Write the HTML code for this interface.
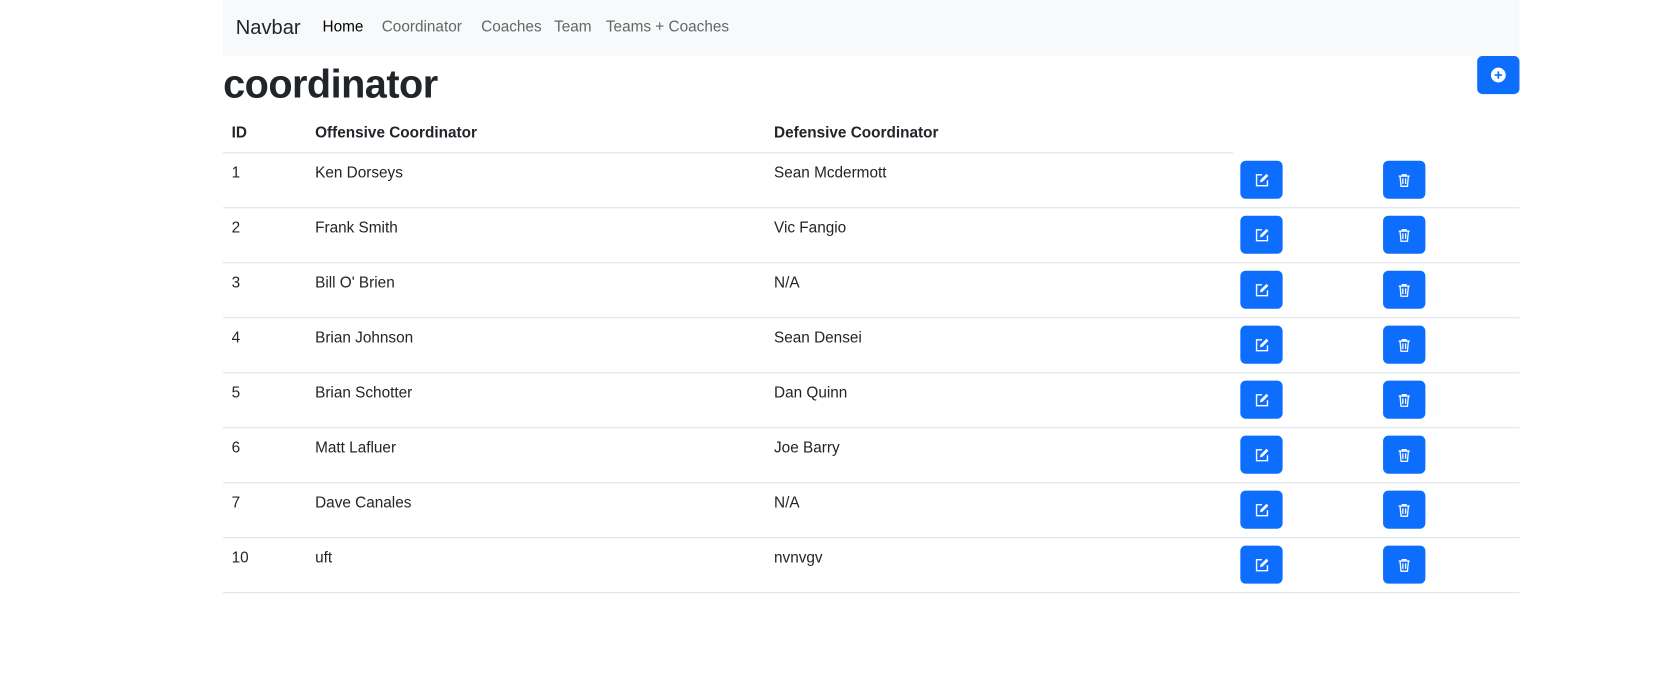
<!DOCTYPE html>
<html><head><style>
*{box-sizing:border-box;margin:0;padding:0}
body{width:1658px;height:682px;background:#fff;font-family:"Liberation Sans",sans-serif;color:#212529;position:relative;overflow:hidden}
#wrap{position:absolute;left:0;top:0;width:1568px;height:645px;transform:scale(1.0574);transform-origin:0 0}
.nav{position:absolute;left:211px;top:0;width:1226px;height:53px;background:#f8f9fa}
.nav .brand{position:absolute;left:12px;top:16px;font-size:19px;color:#212529}
.nav a{position:absolute;top:18px;font-size:14.5px;color:rgba(0,0,0,.6)}
h1{position:absolute;left:211px;top:58px;font-size:37.5px;font-weight:bold;letter-spacing:-.5px}
.btn{position:absolute;width:40px;height:36px;background:#0d6efd;border-radius:5px;display:flex;align-items:center;justify-content:center}
.t{position:absolute;font-size:14.5px}
.th{font-weight:bold}
.line{position:absolute;left:211px;width:1226px;height:1px;background:#dee2e6}
</style></head><body><div id="wrap">
<div class="nav"><span class="brand">Navbar</span>
<a style="left:94px;color:#000">Home</a><a style="left:150px">Coordinator</a><a style="left:244px">Coaches</a><a style="left:313px">Team</a><a style="left:362px">Teams + Coaches</a></div>
<h1>coordinator</h1>
<div class="btn" style="left:1397px;top:53px"><svg width="16" height="16" viewBox="0 0 16 16"><circle cx="8" cy="8" r="7" fill="#fff"/><path d="M8 4.5v7M4.5 8h7" stroke="#0d6efd" stroke-width="1.6"/></svg></div>
<div class="t th" style="left:219px;top:118px">ID</div>
<div class="t th" style="left:298px;top:118px">Offensive Coordinator</div>
<div class="t th" style="left:732px;top:118px">Defensive Coordinator</div>
<div class="line" style="top:144px;width:955px"></div>
<div id="rows"></div>
</div>
<script>
var d=[["1","Ken Dorseys","Sean Mcdermott"],["2","Frank Smith","Vic Fangio"],["3","Bill O' Brien","N/A"],["4","Brian Johnson","Sean Densei"],["5","Brian Schotter","Dan Quinn"],["6","Matt Lafluer","Joe Barry"],["7","Dave Canales","N/A"],["10","uft","nvnvgv"]];
var h="";
var ed='<svg width="15" height="15" viewBox="0 0 16 16" fill="none" stroke="#fff" stroke-width="1.4"><path d="M8 2.5H2.5v11h11V8"/><path d="M6 10l.5-2.5L12.5 1.5l2 2-6 6z" fill="#fff" stroke="none"/></svg>';
var tr='<svg width="14" height="15" viewBox="0 0 16 16" fill="none" stroke="#fff" stroke-width="1.4"><path d="M2 3.5h12M6 3.5V2h4v1.5M3.5 3.5l1 11h7l1-11M6.5 6v6M9.5 6v6"/></svg>';
d.forEach(function(r,i){var y=145+i*52;
h+='<div class="t" style="left:219px;top:'+(y+11)+'px">'+r[0]+'</div><div class="t" style="left:298px;top:'+(y+11)+'px">'+r[1]+'</div><div class="t" style="left:732px;top:'+(y+11)+'px">'+r[2]+'</div>';
h+='<div class="btn" style="left:1173px;top:'+(y+7)+'px">'+ed+'</div><div class="btn" style="left:1308px;top:'+(y+7)+'px">'+tr+'</div>';
h+='<div class="line" style="top:'+(y+51)+'px"></div>';});
document.getElementById("rows").innerHTML=h;
</script>
</body></html>
